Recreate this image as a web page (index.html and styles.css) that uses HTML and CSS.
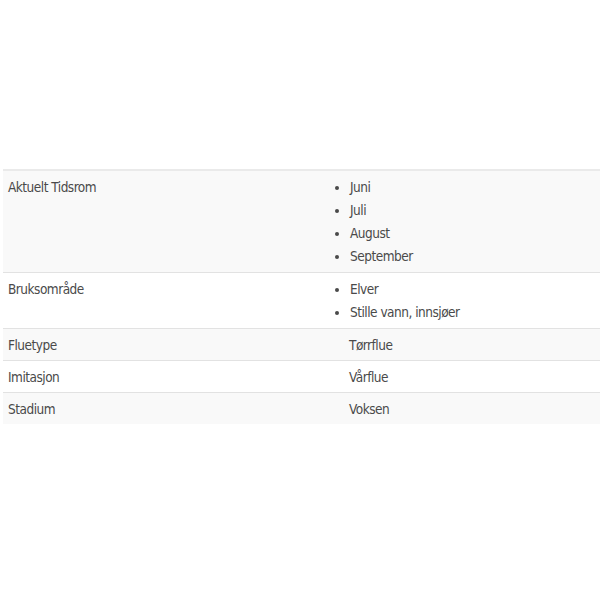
FILE: index.html
```html
<!DOCTYPE html>
<html>
<head>
<meta charset="utf-8">
<link rel="stylesheet" href="styles.css">
</head>
<body>
<div class="page">
<table class="attrs">
<tbody>
<tr class="odd">
<th>Aktuelt Tidsrom</th>
<td><ul><li>Juni</li><li>Juli</li><li>August</li><li>September</li></ul></td>
</tr>
<tr>
<th>Bruksområde</th>
<td><ul><li>Elver</li><li>Stille vann, innsjøer</li></ul></td>
</tr>
<tr class="odd">
<th>Fluetype</th>
<td><p>Tørrflue</p></td>
</tr>
<tr>
<th>Imitasjon</th>
<td><p>Vårflue</p></td>
</tr>
<tr class="odd">
<th>Stadium</th>
<td><p>Voksen</p></td>
</tr>
</tbody>
</table>
</div>
</body>
</html>
```
FILE: styles.css
```css
html, body {
  margin: 0;
  padding: 0;
  background: #fff;
}
.page {
  padding: 169px 0 0 3px;
}
.attrs {
  width: 597px;
  border-collapse: collapse;
  border-top: 2px solid #eaeaea;
  font-family: "DejaVu Sans Condensed", "Liberation Sans Narrow", sans-serif;
  font-size: 13.5px;
  letter-spacing: -0.5px;
  color: #4a4a4a;
}
.attrs tr {
  border-bottom: 1px solid #e2e2e2;
}
.attrs tr:last-child {
  border-bottom: none;
}
.attrs tr.odd {
  background: #f9f9f9;
}
.attrs th, .attrs td {
  text-align: left;
  font-weight: normal;
  vertical-align: top;
  padding: 5px 5px 3px;
  line-height: 23px;
}
.attrs th {
  width: 290px;
}
.attrs ul {
  margin: 0 0 1px;
  padding-left: 42px;
}
.attrs p {
  margin: 0;
  padding-left: 41px;
}
```
